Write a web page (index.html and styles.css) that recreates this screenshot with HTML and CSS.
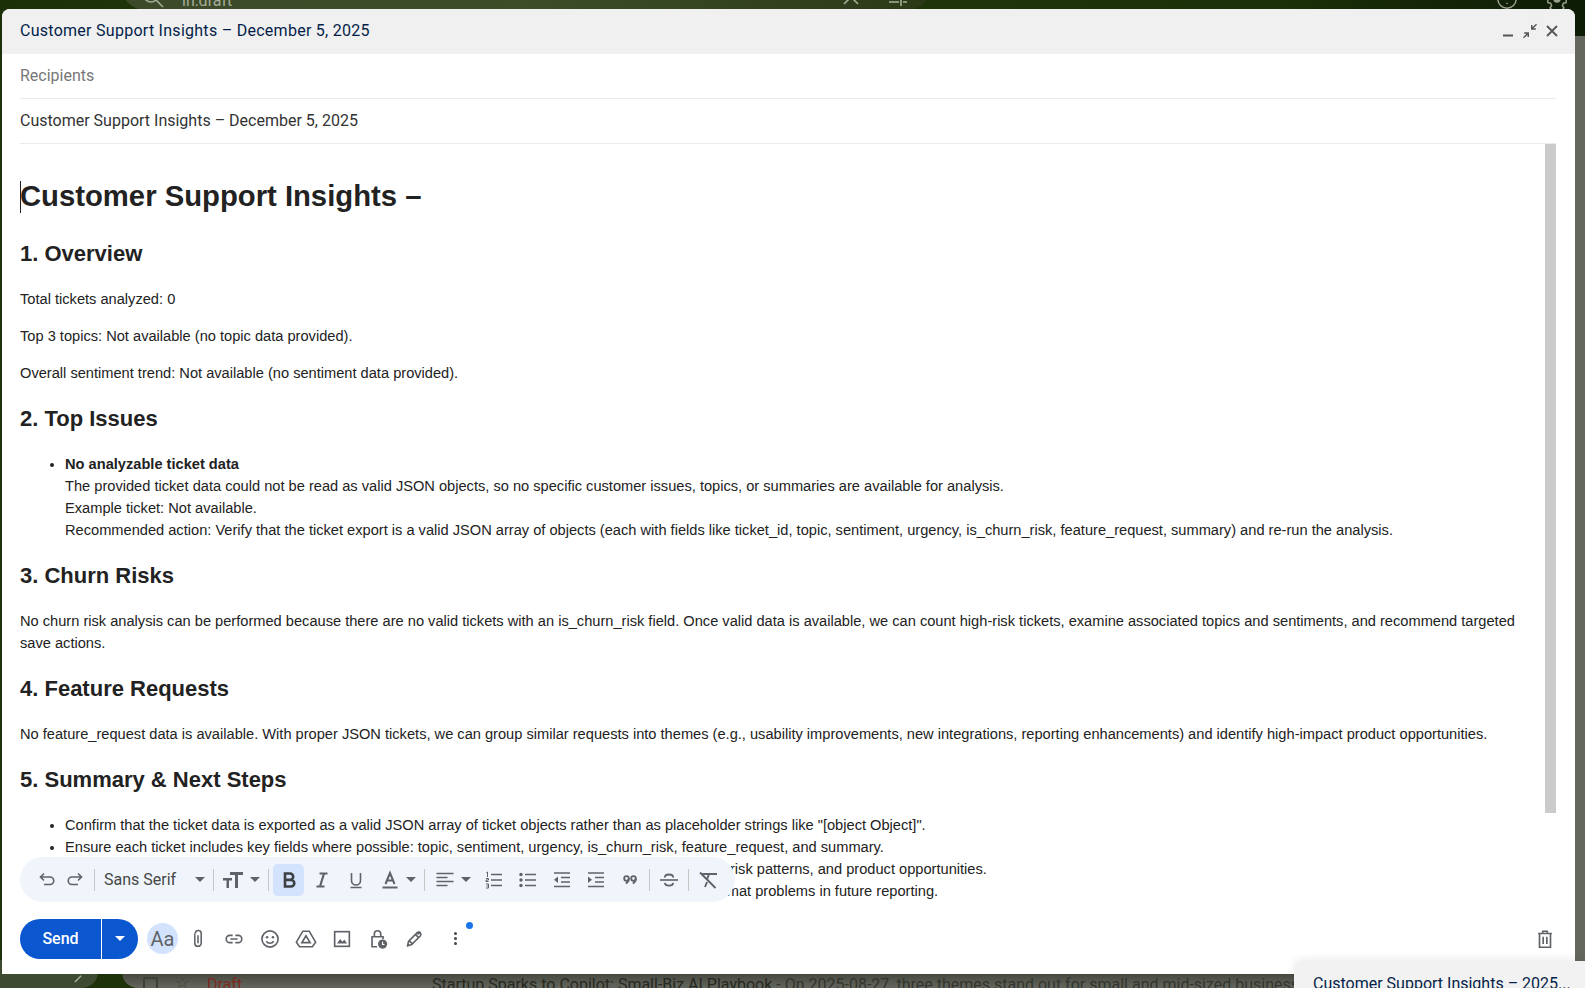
FILE: index.html
```html
<!DOCTYPE html>
<html lang="en">
<head>
    <meta charset="UTF-8">
    <title>Customer Support Insights – December 5, 2025</title>
    <link rel="stylesheet" href="styles.css">
</head>
<body>

<!-- mailbox behind the compose window -->
<div class="backdrop">
    <div class="top-bar">
        <div class="search-bar">
            <svg class="search-icon" viewBox="0 0 24 24"><circle cx="10" cy="10" r="7"/><path d="M15 15l7 7"/></svg>
            <span>in:draft</span>
            <svg class="search-close" viewBox="0 0 24 24"><path d="M5 5l14 14M19 5L5 19"/></svg>
            <svg class="search-tune" viewBox="0 0 24 24"><path d="M3 17h10M17 17h4M15 13v8M3 7h4M11 7h10M9 3v8"/></svg>
        </div>
        <svg class="top-help" viewBox="0 0 24 24"><circle cx="12" cy="12" r="10"/><path d="M9.500 9a2.500 2.500 0 1 1 3.500 2.300c-.7.4-1 .9-1 1.700M12 16v1.500"/></svg>
        <svg class="top-gear" viewBox="0 0 24 24"><path d="M10 2h4l.6 3 2.600 1.100 2.600-1.700 2.800 2.800-1.700 2.600L22 12.400V16l-3 .6-1.100 2.600 1.700 2.600-2.800 2.800H7.200l-2.800-2.800 1.700-2.600L5 16.600 2 16v-3.600l3-.6 1.100-2.600-1.700-2.600 2.800-2.800 2.600 1.700L10.400 5z"/><circle class="gear-dot" cx="12" cy="12" r="4"/></svg>
    </div>
    <div class="nav-fade">
        <svg viewBox="0 0 10 10"><path d="M1 9l7-7"/></svg>
    </div>
    <div class="mail-row">
        <span class="mail-check"></span>
        <span class="mail-star">☆</span>
        <span class="mail-draft">Draft</span>
        <span class="mail-subject">Startup Sparks to Copilot: Small-Biz AI Playbook <span class="mail-snippet">- On 2025-08-27, three themes stand out for small and mid-sized businesses</span></span>
    </div>
</div>

<div class="compose">
    <div class="compose-header">
        <span class="compose-title">Customer Support Insights – December 5, 2025</span>
        <div class="window-btns">
            <svg viewBox="0 0 16 16"><path d="M3 12.500h10" stroke-width="2"/></svg>
            <svg viewBox="0 0 16 16"><path class="fill" d="M15 1.800l-3.500 3.500h2.300v1.500H9V2h1.500v2.300L14 .8zM1 14.200l3.500-3.500H2.200V9.200H7V14H5.500v-2.300L2 15.200z"/></svg>
            <svg viewBox="0 0 16 16"><path d="M3 3l10 10M13 3L3 13" stroke-width="1.800"/></svg>
        </div>
    </div>
    <div class="field field-recipients">Recipients</div>
    <div class="field">Customer Support Insights – December 5, 2025</div>

    <div class="body-wrap">
        <div class="mail-body">
            <h1><span class="caret"></span>Customer Support Insights –</h1>

            <h2>1. Overview</h2>
            <p>Total tickets analyzed: 0</p>
            <p>Top 3 topics: Not available (no topic data provided).</p>
            <p>Overall sentiment trend: Not available (no sentiment data provided).</p>

            <h2>2. Top Issues</h2>
            <ul>
                <li><b>No analyzable ticket data</b><br>
                The provided ticket data could not be read as valid JSON objects, so no specific customer issues, topics, or summaries are available for analysis.<br>
                Example ticket: Not available.<br>
                Recommended action: Verify that the ticket export is a valid JSON array of objects (each with fields like ticket_id, topic, sentiment, urgency, is_churn_risk, feature_request, summary) and re-run the analysis.</li>
            </ul>

            <h2>3. Churn Risks</h2>
            <p>No churn risk analysis can be performed because there are no valid tickets with an is_churn_risk field. Once valid data is available, we can count high-risk tickets, examine associated topics and sentiments, and recommend targeted save actions.</p>

            <h2>4. Feature Requests</h2>
            <p>No feature_request data is available. With proper JSON tickets, we can group similar requests into themes (e.g., usability improvements, new integrations, reporting enhancements) and identify high-impact product opportunities.</p>

            <h2>5. Summary &amp; Next Steps</h2>
            <ul>
                <li>Confirm that the ticket data is exported as a valid JSON array of ticket objects rather than as placeholder strings like "[object Object]".</li>
                <li>Ensure each ticket includes key fields where possible: topic, sentiment, urgency, is_churn_risk, feature_request, and summary.</li>
                <li>Once valid data is available, re-run the analysis to surface the top customer issues, key themes, churn risk patterns, and product opportunities.</li>
                <li>Consider adding an automatic validation step to the ticket export process so that we can catch data format problems in future reporting.</li>
            </ul>
        </div>
        <div class="scrollbar"><div class="scroll-thumb"></div></div>
    </div>

    <div class="format-bar">
        <span class="slot slot-sm"><svg viewBox="0 0 20 20"><path d="M7 14.500h6a3.700 3.700 0 0 0 0-7.500H3.500M7 3.500L3.500 7 7 10.500"/></svg></span>
        <span class="slot slot-sm"><svg viewBox="0 0 20 20"><path d="M13 14.500H7A3.700 3.700 0 0 1 7 7h9.500M13 3.500L16.500 7 13 10.500"/></svg></span>
        <span class="sep sep-undo"></span>
        <span class="font-name">Sans Serif</span>
        <span class="arrow"></span>
        <span class="sep"></span>
        <span class="slot slot-lg"><svg class="size-icon" viewBox="0 0 24 20"><path class="fill" d="M9 2h13v3h-5v13h-3V5H9zM2 8h9v2.500H8V18H5.500v-7.500H2z"/></svg></span>
        <span class="arrow arrow-size"></span>
        <span class="sep"></span>
        <span class="bold-btn"><svg viewBox="0 0 20 20"><path d="M6 3.500h5a3.200 3.200 0 0 1 0 6.400H6zM6 9.900h6a3.300 3.300 0 0 1 0 6.600H6z" stroke-width="2.600"/></svg></span>
        <span class="slot slot-italic"><svg viewBox="0 0 20 20"><path d="M7.500 3.500h8M4.500 16.500h8M12 3.500l-4 13" stroke-width="2.200"/></svg></span>
        <span class="slot"><svg viewBox="0 0 20 20"><path d="M5.500 3v7.500a4.500 4.500 0 0 0 9 0V3M4.500 17.500h11"/></svg></span>
        <span class="slot"><svg viewBox="0 0 20 20"><path d="M5.500 14L10 3l4.500 11M7 10.500h6" stroke-width="2"/><path d="M2.500 17.500h15" stroke-width="2"/></svg></span>
        <span class="arrow arrow-color"></span>
        <span class="sep"></span>
        <span class="slot slot-xl"><svg viewBox="0 0 20 20"><path d="M1.500 3.500h17M1.500 7.500h11M1.500 11.500h17M1.500 15.500h11" stroke-width="1.700"/></svg></span>
        <span class="arrow arrow-align"></span>
        <span class="slot slot-list"><svg viewBox="0 0 20 20"><path d="M7 4.500h11M7 10h11M7 15.500h11" stroke-width="1.700"/><path d="M2.500 2.500l1-.5v5" stroke-width="1"/><path d="M2 8.500h2.500v1.500H2v1.500h2.500" stroke-width="1"/><path d="M2 14h2.500v4H2M2.500 16h2" stroke-width="1"/></svg></span>
        <span class="slot"><svg viewBox="0 0 20 20"><path d="M7 4.500h11M7 10h11M7 15.500h11" stroke-width="1.700"/><circle class="fill" cx="3" cy="4.500" r="1.700"/><circle class="fill" cx="3" cy="10" r="1.700"/><circle class="fill" cx="3" cy="15.500" r="1.700"/></svg></span>
        <span class="slot"><svg viewBox="0 0 20 20"><path d="M2 3h16M9 7.500h9M9 12h9M2 16.500h16" stroke-width="1.700"/><path class="fill" d="M6 6.500v6.500L2 9.750z"/></svg></span>
        <span class="slot"><svg viewBox="0 0 20 20"><path d="M2 3h16M9 7.500h9M9 12h9M2 16.500h16" stroke-width="1.700"/><path class="fill" d="M2 6.500v6.500l4-3.250z"/></svg></span>
        <span class="slot"><svg viewBox="0 0 20 20"><circle cx="6.500" cy="8.500" r="2.300" stroke-width="1.800"/><path d="M8.800 8.500c0 2.300-1 4-3 5" stroke-width="1.800"/><circle cx="13.500" cy="8.500" r="2.300" stroke-width="1.800"/><path d="M15.800 8.500c0 2.300-1 4-3 5" stroke-width="1.800"/></svg></span>
        <span class="sep sep-quote"></span>
        <span class="slot slot-lg"><svg viewBox="0 0 20 20"><path d="M1 10h18" stroke-width="1.600"/><path d="M5.800 7.500c0-4 8.400-4 8.400 0M5.800 12.800c.5 3.700 8 3.700 8.400 0" stroke-width="1.800"/></svg></span>
        <span class="sep sep-flush"></span>
        <span class="slot slot-lg"><svg viewBox="0 0 20 20"><path d="M4 4h15M11 4L9 9.500M2 2.500l15.500 15.500M9 12l-2 5" stroke-width="1.900"/></svg></span>
    </div>

    <div class="action-bar">
        <div class="send-btn">
            <span class="send-label">Send</span>
            <span class="send-more"><span class="arrow arrow-white"></span></span>
        </div>
        <span class="aa-btn">Aa</span>
        <span class="act act-first"><svg viewBox="0 0 24 24"><path d="M8.500 8v8.500a3.500 3.500 0 0 0 7 0V6a3.200 3.200 0 0 0-6.400 0M12 8v8.500" stroke-width="1.700"/><path d="M8.500 6v2" stroke-width="1.700"/></svg></span>
        <span class="act"><svg viewBox="0 0 24 24"><path d="M10.500 8H7.500a4 4 0 0 0 0 8h3M13.500 8h3a4 4 0 0 1 0 8h-3M8 12h8" stroke-width="1.800"/></svg></span>
        <span class="act"><svg viewBox="0 0 24 24"><circle cx="12" cy="12" r="8.800" stroke-width="1.800"/><circle class="fill" cx="8.800" cy="10" r="1.400"/><circle class="fill" cx="15.200" cy="10" r="1.400"/><path d="M8 14.500c1.800 2.800 6.200 2.800 8 0" stroke-width="1.700"/></svg></span>
        <span class="act"><svg viewBox="0 0 24 24"><path d="M8.500 3.500h7L22.500 15.500 19 20.500H5L1.500 15.500z M12 8.500l-4.500 7.500h9z" stroke-width="1.800"/></svg></span>
        <span class="act"><svg viewBox="0 0 24 24"><rect x="4" y="4" width="16" height="16" stroke-width="1.800"/><path class="fill" d="M6.500 17l3.500-5 2.500 3 2-2.500 3 4.500z"/></svg></span>
        <span class="act"><svg viewBox="0 0 24 24"><path d="M11 20.500H5.500v-11h12v2.500M8 9.500V6.500a3.500 3.500 0 0 1 7 0v3" stroke-width="1.800"/><circle class="fill" cx="17" cy="17.500" r="5"/><path class="white" d="M17 15v3h2" stroke-width="1.200"/></svg></span>
        <span class="act"><svg viewBox="0 0 24 24"><path d="M5 19.500l1-5L15.500 5a2.500 2.500 0 0 1 3.500 3.500L9.500 18zM13.500 7l3.500 3.500M7 14l3 3M19 4l-3 3" stroke-width="1.800"/></svg></span>
        <span class="more-dots"><i></i><i></i><i></i><b class="blue-dot"></b></span>
        <span class="act trash"><svg viewBox="0 0 24 24"><path d="M4.500 6h15M9.500 6V3.500h5V6M6 6v15h12V6M10 9.500v8M14 9.500v8" stroke-width="1.800"/></svg></span>
    </div>
</div>

<div class="min-tab">Customer Support Insights – 2025...</div>

</body>
</html>
```

FILE: styles.css
```css
* {
    box-sizing: border-box;
}
html, body {
    height: 100%;
}
body {
    margin: 0;
    overflow: hidden;
    position: relative;
    background: #1d3208;
    font-family: "Liberation Sans", Arial, sans-serif;
    color: #222;
}
svg {
    display: block;
    flex: none;
    fill: none;
    stroke: #5f6368;
    stroke-width: 1.6;
}
svg .fill {
    fill: #5f6368;
    stroke: none;
}
svg .white {
    stroke: #fff;
}

/* mailbox behind */
.backdrop {
    position: absolute;
    inset: 0;
}
.backdrop::after {
    content: "";
    position: absolute;
    top: 36px;
    bottom: 0;
    right: 0;
    width: 10px;
    background: #63675d;
}
.top-bar {
    height: 40px;
    background: linear-gradient(90deg, #1c3007 0, #243c0c 30%, #1b3008 80%, #0d1c05 100%);
    position: relative;
    color: #b8bda8;
}
.search-bar {
    position: absolute;
    left: 122px;
    top: -36px;
    width: 808px;
    height: 46px;
    border-radius: 24px;
    background: linear-gradient(90deg, #3c4a2a, #3d4d28 50%, #2c3918);
    display: flex;
    align-items: center;
    gap: 17px;
    padding-left: 19px;
    font-family: Roboto, sans-serif;
    font-size: 16px;
    color: #a7ad98;
}
.search-bar span {
    margin-top: 26px;
    flex: 1;
}
.search-bar svg {
    width: 24px;
    height: 24px;
    margin-top: 20px;
    stroke: #a7ad98;
}
.search-close {
    margin-right: 6px;
}
.search-tune {
    margin-right: 20px;
}
.top-help, .top-gear {
    position: absolute;
    top: -12px;
    width: 22px;
    height: 22px;
    stroke: #9aa08e;
}
.top-help {
    left: 1496px;
}
.top-gear {
    left: 1546px;
}
.gear-dot {
    fill: #9aa08e;
    stroke: none;
}
.nav-fade {
    position: absolute;
    left: 0;
    bottom: 0;
    width: 98px;
    height: 28px;
    background: #3e4a31;
    border-radius: 0 0 16px 0;
}
.nav-fade svg {
    position: absolute;
    left: 74px;
    top: 14px;
    width: 9px;
    height: 9px;
    stroke: #aab09f;
}
.mail-row {
    position: absolute;
    left: 122px;
    right: 0;
    top: 960px;
    height: 28px;
    border-radius: 0 0 0 16px;
    background: linear-gradient(180deg, #44463e 45%, #63665c);
    color: #262821;
    font-family: Roboto, sans-serif;
    font-size: 16px;
}
.mail-check {
    position: absolute;
    left: 21px;
    top: 17px;
    width: 15px;
    height: 15px;
    border: 2px solid #3c3f37;
    border-radius: 2px;
}
.mail-star {
    position: absolute;
    left: 53px;
    top: 13px;
    color: #3c3f37;
}
.mail-draft {
    position: absolute;
    left: 85px;
    top: 15px;
    color: #7c2a22;
}
.mail-subject {
    position: absolute;
    left: 310px;
    top: 15px;
    white-space: nowrap;
}
.mail-snippet {
    color: #33352e;
}

/* compose window */
.compose {
    position: absolute;
    left: 2px;
    top: 9px;
    width: 1573px;
    height: 965px;
    background: #fff;
    border-radius: 8px 8px 0 0;
    display: flex;
    flex-direction: column;
}
.compose-header {
    height: 45px;
    background: #f0f0f0;
    border-radius: 8px 8px 0 0;
    display: flex;
    align-items: center;
    justify-content: space-between;
    padding: 0 15px 2px 18px;
}
.compose-title {
    font-family: Roboto, sans-serif;
    font-size: 16px;
    letter-spacing: .27px;
    color: #041e49;
}
.window-btns {
    display: flex;
    gap: 6px;
}
.window-btns svg {
    width: 16px;
    height: 16px;
    stroke: #555;
}
.window-btns svg .fill {
    fill: #555;
}
.field {
    flex: none;
    height: 45px;
    margin: 0 19px 0 18px;
    padding-bottom: 2px;
    display: flex;
    align-items: center;
    border-bottom: 1px solid #e8eaed;
    font-family: Roboto, sans-serif;
    font-size: 16px;
    color: #333;
}
.field-recipients {
    color: #777;
}

.body-wrap {
    flex: 1;
    min-height: 0;
    display: flex;
    margin: 0 19px 0 18px;
    overflow: hidden;
}
.mail-body {
    flex: 1;
    min-width: 0;
    padding-right: 20px;
    font-size: 14.63px;
    line-height: 22px;
    overflow: hidden;
}
.scrollbar {
    flex: none;
    width: 11px;
}
.scroll-thumb {
    height: 669px;
    background: #cbcbcb;
}
.mail-body h1 {
    position: relative;
    font-size: 29.26px;
    line-height: 37px;
    margin: 34px 0 25px;
}
.caret {
    position: absolute;
    left: 0;
    top: 3px;
    width: 1px;
    height: 32px;
    background: #222;
}
.mail-body h2 {
    font-size: 22px;
    line-height: 28px;
    margin: 20px 0 0;
}
.mail-body p + h2 {
    margin-top: 20.5px;
}
.mail-body ul + h2 {
    margin-top: 21.5px;
}
.mail-body h2:last-of-type {
    margin-top: 21.5px;
}
.mail-body p {
    margin: 15px 0 0;
}
.mail-body ul {
    margin: 20px 0 0;
    padding-left: 45px;
}
.mail-body h2 + p {
    margin-top: 20px;
}

/* formatting toolbar */
.format-bar {
    position: absolute;
    left: 18px;
    top: 848px;
    width: 715px;
    height: 45px;
    border-radius: 23px;
    background: #f0f4fb;
    display: flex;
    align-items: center;
    padding-left: 13px;
}
.format-bar svg {
    width: 20px;
    height: 20px;
}
.format-bar .size-icon {
    width: 24px;
}
.slot {
    flex: none;
    width: 34px;
    height: 32px;
    display: flex;
    align-items: center;
    justify-content: center;
}
.slot-sm {
    width: 28px;
}
.slot-lg {
    width: 38px;
}
.slot-xl {
    width: 40px;
}
.slot-italic {
    margin-left: 1px;
}
.slot-list {
    margin-left: 6px;
}
.sep {
    width: 1px;
    height: 22px;
    margin-left: 8px;
    background: #c4c7c5;
    flex: none;
}
.sep-undo {
    margin-left: 5px;
}
.sep-quote {
    margin-left: 2px;
}
.sep-flush {
    margin-left: 0;
}
.font-name {
    flex: none;
    margin-left: 9px;
    width: 91px;
    font-family: Roboto, sans-serif;
    font-size: 16px;
    color: #444746;
    white-space: nowrap;
}
.arrow {
    flex: none;
    width: 0;
    height: 0;
    border-left: 5px solid transparent;
    border-right: 5px solid transparent;
    border-top: 5px solid #5f6368;
}
.arrow-size {
    margin-left: -2px;
}
.arrow-color {
    margin-left: -1px;
}
.arrow-align {
    margin-left: -4px;
}
.arrow-white {
    border-top-color: #fff;
}
.bold-btn {
    flex: none;
    width: 31px;
    height: 32px;
    margin-left: 4px;
    border-radius: 5px;
    background: #d3e3fd;
    display: flex;
    align-items: center;
    justify-content: center;
}
.bold-btn svg {
    stroke: #3c4043;
}

/* bottom actions */
.action-bar {
    flex: none;
    height: 62px;
    display: flex;
    align-items: center;
    padding: 0 18px 9px;
    background: #fff;
    position: relative;
}
.send-btn {
    flex: none;
    display: flex;
    width: 118px;
    height: 40px;
    border-radius: 20px;
    overflow: hidden;
    background: #0b57d0;
    color: #fff;
    font-family: Roboto, sans-serif;
    font-size: 16px;
    font-weight: 500;
}
.send-label {
    width: 82px;
    display: flex;
    align-items: center;
    justify-content: center;
    border-right: 1px solid #fff;
}
.send-more {
    flex: 1;
    display: flex;
    align-items: center;
    justify-content: center;
}
.aa-btn {
    flex: none;
    margin-left: 9px;
    width: 31px;
    height: 31px;
    border-radius: 50%;
    background: #d3e3fd;
    display: flex;
    align-items: center;
    justify-content: center;
    font-family: Roboto, sans-serif;
    font-size: 20px;
    color: #5f6368;
}
.act {
    flex: none;
    width: 36px;
    display: flex;
    justify-content: center;
}
.act svg {
    width: 22px;
    height: 22px;
}
.act-first {
    margin-left: 2px;
}
.more-dots {
    position: relative;
    flex: none;
    margin-left: 5px;
    width: 36px;
    display: flex;
    flex-direction: column;
    align-items: center;
    gap: 2px;
}
.more-dots i {
    width: 3px;
    height: 3px;
    border-radius: 50%;
    background: #444746;
}
.blue-dot {
    position: absolute;
    left: 29px;
    top: -10px;
    width: 7px;
    height: 7px;
    border-radius: 50%;
    background: #1a73e8;
}
.trash {
    margin-left: auto;
    margin-right: -6px;
}

/* minimised draft tab */
.min-tab {
    position: absolute;
    left: 1294px;
    right: 0;
    top: 961px;
    height: 27px;
    padding: 13px 0 0 19px;
    background: #f2f2f2;
    border-radius: 8px 0 0 0;
    box-shadow: 0 -2px 8px rgba(0, 0, 0, .08);
    font-family: Roboto, sans-serif;
    font-size: 16px;
    line-height: 20px;
    color: #041e49;
    white-space: nowrap;
    overflow: hidden;
}
```
